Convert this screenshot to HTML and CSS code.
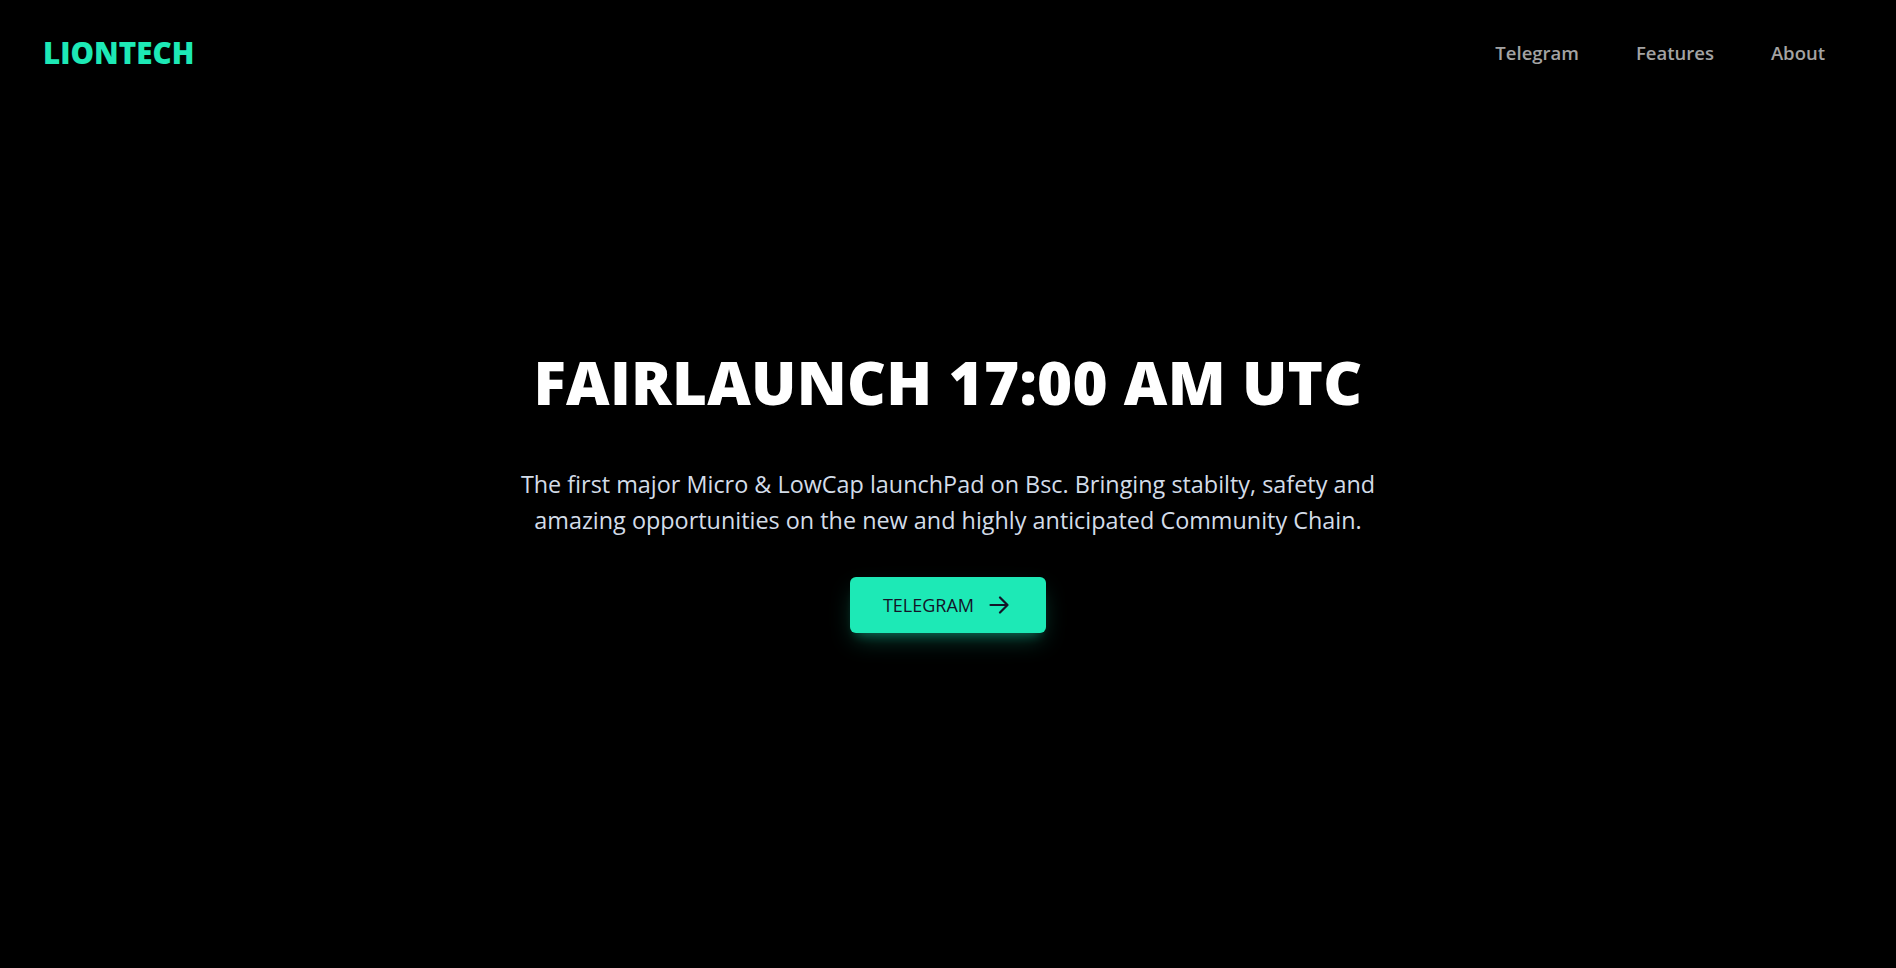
FILE: index.html
```html
<!DOCTYPE html>
<html lang="en">
<head>
<meta charset="utf-8">
<title>LIONTECH</title>
<link rel="stylesheet" href="styles.css">
</head>
<body>
<header class="site-header">
  <a class="logo" href="#">LIONTECH</a>
  <nav class="nav">
    <a class="nav-link" href="#">Telegram</a>
    <a class="nav-link" href="#">Features</a>
    <a class="nav-link" href="#">About</a>
  </nav>
</header>
<main class="hero">
  <h1 class="hero-title">FAIRLAUNCH 17:00 AM UTC</h1>
  <p class="hero-text">The first major Micro &amp; LowCap launchPad on Bsc. Bringing stabilty, safety and<br>amazing opportunities on the new and highly anticipated Community Chain.</p>
  <a class="btn" href="#">
    <span>TELEGRAM</span>
    <svg class="btn-icon" viewBox="0 0 20 20" width="20" height="20" fill="none" stroke="currentColor" stroke-width="2.2" stroke-linecap="round" stroke-linejoin="round"><path d="M1.5 10h17M11 2.5l7.5 7.5-7.5 7.5"/></svg>
  </a>
</main>
</body>
</html>
```
FILE: styles.css
```css
* { box-sizing: border-box; }
html, body {
  margin: 0;
  padding: 0;
  background: #000;
}
body {
  font-family: "Segoe UI", "Open Sans", sans-serif;
  color: #fff;
  min-height: 968px;
}
a { text-decoration: none; }
.site-header {
  height: 106px;
  display: flex;
  align-items: center;
  justify-content: space-between;
  padding: 0 71px 0 43px;
}
.logo {
  color: #1de9b6;
  font-weight: 800;
  font-size: 29.6px;
  line-height: 1;
}
.nav {
  display: flex;
  gap: 57px;
}
.nav-link {
  color: #a3a3a3;
  font-weight: 600;
  font-size: 18.5px;
  line-height: 1;
}
.hero {
  display: flex;
  flex-direction: column;
  align-items: center;
  padding-top: 246px;
  text-align: center;
}
.hero-title {
  margin: 0;
  font-size: 60px;
  line-height: 1;
  font-weight: 800;
  letter-spacing: 0.3px;
  color: #fff;
}
.hero-text {
  margin: 54px 0 0;
  font-size: 23.4px;
  line-height: 36px;
  font-weight: 500;
  color: #d3dce8;
}
.btn {
  margin-top: 39px;
  height: 56px;
  padding: 0 37px 0 33px;
  display: flex;
  align-items: center;
  gap: 15px;
  background: #1de9b6;
  color: #141428;
  border-radius: 6px;
  font-size: 18px;
  box-shadow: 0 10px 25px -5px rgba(29, 233, 182, 0.3), 0 8px 10px -6px rgba(29, 233, 182, 0.3);
}
.btn-icon { display: block; }
```
